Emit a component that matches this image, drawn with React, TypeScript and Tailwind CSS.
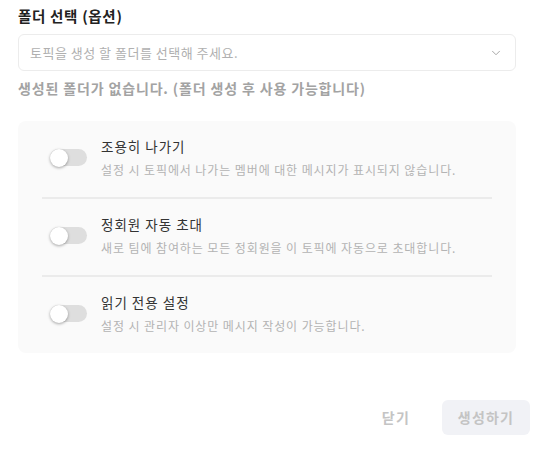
import React, { useState } from 'react';
import { ChevronDown } from 'lucide-react';

const options = [
    { key: 'quiet', title: '조용히 나가기', desc: '설정 시 토픽에서 나가는 멤버에 대한 메시지가 표시되지 않습니다.' },
    { key: 'invite', title: '정회원 자동 초대', desc: '새로 팀에 참여하는 모든 정회원을 이 토픽에 자동으로 초대합니다.' },
    { key: 'readonly', title: '읽기 전용 설정', desc: '설정 시 관리자 이상만 메시지 작성이 가능합니다.' },
];

const Toggle: React.FC<{ on: boolean; onChange: () => void }> = ({ on, onChange }) => (
    <button
        onClick={onChange}
        className={`relative h-[17px] w-[37px] shrink-0 rounded-full ${on ? 'bg-[#5b8def]' : 'bg-[#dedede]'}`}
    >
        <span
            className={`absolute top-1/2 h-[18px] w-[18px] -translate-y-1/2 rounded-full bg-white shadow-[0_1px_3px_rgba(0,0,0,0.35)] ${on ? 'left-[19px]' : 'left-0'}`}
        />
    </button>
);

export default function App() {
    const [state, setState] = useState<Record<string, boolean>>({});

    return (
        <div className="h-[449px] w-[542px] bg-white font-['Noto_Sans_CJK_KR','Noto_Sans',sans-serif]">
            <div className="w-[498px] pl-[18px] pt-[5px] box-content">
                <div className="text-[14.5px] font-bold leading-[22px] tracking-[0.7px] text-[#222]">폴더 선택 (옵션)</div>
                <div className="mt-[7px] flex h-[37px] items-center justify-between rounded-[6px] border border-[#ececec] pl-[11px] pr-[12px]">
                    <span className="text-[13px] tracking-[0.5px] text-[#b0b0b0]">토픽을 생성 할 폴더를 선택해 주세요.</span>
                    <ChevronDown className="h-[14px] w-[14px] text-[#9a9a9a]" strokeWidth={1.5} />
                </div>
                <div className="mt-[7px] text-[14px] font-bold leading-[20px] tracking-[0.85px] text-[#a3a3a3]">
                    생성된 폴더가 없습니다. (폴더 생성 후 사용 가능합니다)
                </div>

                {/* Options */}
                <div className="mt-[23px] rounded-[8px] bg-[#fafafa] px-6">
                    {options.map((o, i) => (
                        <div
                            key={o.key}
                            className={`flex items-center gap-[14px] pl-[8px] pt-[15px] ${i < options.length - 1 ? 'border-b-2 border-[#ebebeb] pb-[18px]' : 'pb-[18px]'}`}
                        >
                            <Toggle on={!!state[o.key]} onChange={() => setState(s => ({ ...s, [o.key]: !s[o.key] }))} />
                            <div>
                                <div className="text-[13.5px] leading-[20px] tracking-[1px] text-[#333]">{o.title}</div>
                                <div className="mt-[5px] text-[12px] leading-[18px] tracking-[0.9px] text-[#b3b3b3]">{o.desc}</div>
                            </div>
                        </div>
                    ))}
                </div>
            </div>

            {/* Footer */}
            <div className="mt-[47px] flex items-center justify-end gap-[18px] pr-[12px]">
                <button className="px-[14px] text-[14px] font-bold tracking-[1.2px] text-[#c4c4c4]">닫기</button>
                <button className="h-[35px] w-[88px] rounded-[6px] bg-[#f1f2f6] text-[14px] font-bold tracking-[1.2px] text-[#c4c4c4]">
                    생성하기
                </button>
            </div>
        </div>
    );
}
